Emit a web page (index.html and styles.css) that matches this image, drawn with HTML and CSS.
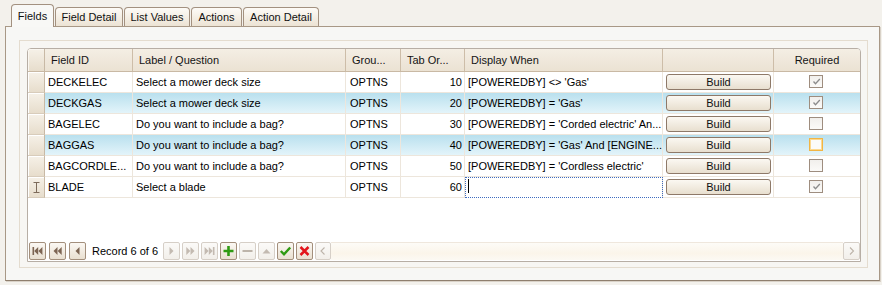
FILE: index.html
```html
<!DOCTYPE html>
<html>
<head>
<meta charset="utf-8">
<link rel="stylesheet" href="styles.css">
</head>
<body>
<div class="tabs">
  <div class="tab active w1">Fields</div>
  <div class="tab w2">Field Detail</div>
  <div class="tab w3">List Values</div>
  <div class="tab w4">Actions</div>
  <div class="tab w5">Action Detail</div>
</div>
<div class="page">
  <div class="panel">
    <div class="grid">
      <div class="row head">
        <div class="c ind"></div>
        <div class="c fid">Field ID</div>
        <div class="c lbl">Label / Question</div>
        <div class="c grp">Grou...</div>
        <div class="c tab-o">Tab Or...</div>
        <div class="c dw">Display When</div>
        <div class="c bld"></div>
        <div class="c req center">Required</div>
      </div>

      <div class="row">
        <div class="c ind"></div>
        <div class="c fid">DECKELEC</div>
        <div class="c lbl">Select a mower deck size</div>
        <div class="c grp">OPTNS</div>
        <div class="c tab-o num">10</div>
        <div class="c dw">[POWEREDBY] &lt;&gt; 'Gas'</div>
        <div class="c bld"><div class="btn">Build</div></div>
        <div class="c req"><div class="chk"><svg width="11" height="11" viewBox="0 0 11 11"><path d="M2.5 5.5 L4.5 7.8 L8.8 3" fill="none" stroke="#8c8c8c" stroke-width="1.3"/></svg></div></div>
      </div>

      <div class="row sel">
        <div class="c ind"></div>
        <div class="c fid">DECKGAS</div>
        <div class="c lbl">Select a mower deck size</div>
        <div class="c grp">OPTNS</div>
        <div class="c tab-o num">20</div>
        <div class="c dw">[POWEREDBY] = 'Gas'</div>
        <div class="c bld"><div class="btn">Build</div></div>
        <div class="c req"><div class="chk"><svg width="11" height="11" viewBox="0 0 11 11"><path d="M2.5 5.5 L4.5 7.8 L8.8 3" fill="none" stroke="#8c8c8c" stroke-width="1.3"/></svg></div></div>
      </div>

      <div class="row">
        <div class="c ind"></div>
        <div class="c fid">BAGELEC</div>
        <div class="c lbl">Do you want to include a bag?</div>
        <div class="c grp">OPTNS</div>
        <div class="c tab-o num">30</div>
        <div class="c dw">[POWEREDBY] = 'Corded electric' An...</div>
        <div class="c bld"><div class="btn">Build</div></div>
        <div class="c req"><div class="chk"></div></div>
      </div>

      <div class="row sel">
        <div class="c ind"></div>
        <div class="c fid">BAGGAS</div>
        <div class="c lbl">Do you want to include a bag?</div>
        <div class="c grp">OPTNS</div>
        <div class="c tab-o num">40</div>
        <div class="c dw">[POWEREDBY] = 'Gas' And [ENGINE...</div>
        <div class="c bld"><div class="btn">Build</div></div>
        <div class="c req"><div class="chk hot"></div></div>
      </div>

      <div class="row">
        <div class="c ind"></div>
        <div class="c fid">BAGCORDLE...</div>
        <div class="c lbl">Do you want to include a bag?</div>
        <div class="c grp">OPTNS</div>
        <div class="c tab-o num">50</div>
        <div class="c dw">[POWEREDBY] = 'Cordless electric'</div>
        <div class="c bld"><div class="btn">Build</div></div>
        <div class="c req"><div class="chk"></div></div>
      </div>

      <div class="row">
        <div class="c ind"><svg class="ibeam" width="7" height="11" viewBox="0 0 7 11"><path d="M0.5 0.5 H6.5 M3.5 0.5 V10.5 M0.5 10.5 H6.5" fill="none" stroke="#7d6b5a" stroke-width="1"/></svg></div>
        <div class="c fid">BLADE</div>
        <div class="c lbl">Select a blade</div>
        <div class="c grp">OPTNS</div>
        <div class="c tab-o num">60</div>
        <div class="c dw edit"><span class="caret"></span></div>
        <div class="c bld"><div class="btn">Build</div></div>
        <div class="c req"><div class="chk"><svg width="11" height="11" viewBox="0 0 11 11"><path d="M2.5 5.5 L4.5 7.8 L8.8 3" fill="none" stroke="#8c8c8c" stroke-width="1.3"/></svg></div></div>
      </div>

      <div class="empty"></div>

      <div class="nav">
        <div class="nb on g3"><svg width="15" height="16" viewBox="0 0 15 16"><rect x="2.5" y="4" width="1.6" height="8" fill="#7d6553"/><path d="M8.2 4 V12 L4.2 8 Z M12.4 4 V12 L8.4 8 Z" fill="#7d6553"/></svg></div>
        <div class="nb on g3"><svg width="15" height="16" viewBox="0 0 15 16"><path d="M7.5 4 V12 L3.5 8 Z M11.7 4 V12 L7.7 8 Z" fill="#7d6553"/></svg></div>
        <div class="nb on"><svg width="15" height="16" viewBox="0 0 15 16"><path d="M9.5 4 V12 L5.5 8 Z" fill="#7d6553"/></svg></div>
        <div class="rec">Record 6 of 6</div>
        <div class="nb off g2"><svg width="15" height="16" viewBox="0 0 15 16"><path d="M5.5 4 V12 L9.5 8 Z" fill="#c3bab1"/></svg></div>
        <div class="nb off g2"><svg width="15" height="16" viewBox="0 0 15 16"><path d="M3.3 4 V12 L7.3 8 Z M7.5 4 V12 L11.5 8 Z" fill="#c3bab1"/></svg></div>
        <div class="nb off g2"><svg width="15" height="16" viewBox="0 0 15 16"><path d="M2.6 4 V12 L6.6 8 Z M6.8 4 V12 L10.8 8 Z" fill="#c3bab1"/><rect x="10.9" y="4" width="1.6" height="8" fill="#c3bab1"/></svg></div>
        <div class="nb on g2"><svg width="15" height="16" viewBox="0 0 15 16"><path d="M2.5 6.7 H12.5 V9.3 H2.5 Z M6.2 3 H8.8 V13 H6.2 Z" fill="#2f9a12"/></svg></div>
        <div class="nb off g2"><svg width="15" height="16" viewBox="0 0 15 16"><path d="M2.5 7 H12.5 V9 H2.5 Z" fill="#bdb4aa"/></svg></div>
        <div class="nb off g2"><svg width="15" height="16" viewBox="0 0 15 16"><path d="M3.5 10.5 H11.5 L7.5 6 Z" fill="#c3bab1"/></svg></div>
        <div class="nb on g2"><svg width="15" height="16" viewBox="0 0 15 16"><path d="M2.8 8 L6 11.3 L12.2 4.5" fill="none" stroke="#2f9a12" stroke-width="2.4"/></svg></div>
        <div class="nb on g2"><svg width="15" height="16" viewBox="0 0 15 16"><path d="M3.5 4 L11.5 12 M11.5 4 L3.5 12" fill="none" stroke="#e3151b" stroke-width="2.5"/></svg></div>
        <div class="nb off sl"><svg width="14" height="16" viewBox="0 0 14 16"><path d="M8.5 4.5 L5 8 L8.5 11.5" fill="none" stroke="#bdb4aa" stroke-width="1.1"/></svg></div>
        <div class="track"></div>
        <div class="nb off sr"><svg width="15" height="16" viewBox="0 0 15 16"><path d="M6 4.5 L9.5 8 L6 11.5" fill="none" stroke="#bdb4aa" stroke-width="1.1"/></svg></div>
      </div>
    </div>
  </div>
</div>
</body>
</html>
```

FILE: styles.css
```css
* { box-sizing: border-box; }
html, body {
  margin: 0;
  padding: 0;
}
body {
  background: #f3f1ec;
  font-family: "Liberation Sans", Arial, sans-serif;
  font-size: 11px;
  color: #000;
  width: 882px;
  height: 285px;
  overflow: hidden;
}

/* tabs */
.tabs {
  display: flex;
  align-items: flex-end;
  height: 26px;
  padding-left: 11px;
  gap: 1px;
}
.tab {
  height: 19px;
  border: 1px solid #a39180;
  border-bottom: none;
  border-radius: 4px 4px 0 0;
  background: linear-gradient(#fdfbf7, #ece3d4);
  text-align: center;
  line-height: 19px;
  font-size: 11px;
  color: #111;
  white-space: nowrap;
}
.tab.active {
  height: 23px;
  margin-bottom: -1px;
  position: relative;
  z-index: 2;
  background: #f8f8f6;
  line-height: 22px;
  padding-bottom: 2px;
}
.w1 { width: 43px; }
.w2 { width: 68px; }
.w3 { width: 66px; }
.w4 { width: 51px; }
.w5 { width: 76px; }

/* tab page */
.page {
  margin-left: 5px;
  width: 875px;
  border: 1px solid #a89886;
  border-bottom-color: #8f7f6e;
  background: #f7f7f5;
  padding: 13px 11px 12px 13px;
  box-shadow: 1px 1px 0 #d9d2c8;
}
.panel {
  border: 1px solid #e4dccf;
  background: #f7f6f3;
  padding: 7px 6px 5px 7px;
}
.grid {
  border: 1px solid #b7aea5;
  border-radius: 4px 4px 0 0;
  background: #fff;
  overflow: hidden;
}

/* rows */
.row {
  display: flex;
  height: 21px;
  border-bottom: 1px solid #ede6dc;
}
.row.head {
  height: 23px;
  border-bottom: 1px solid #c9b9a4;
  background: linear-gradient(#f4eee4, #ebe2d3);
}
.row.sel {
  background: linear-gradient(#b9e0ee, #e3f4fa);
}
.c {
  height: 100%;
  border-right: 1px solid #ede6dc;
  padding: 0 3px;
  line-height: 20px;
  white-space: nowrap;
  overflow: hidden;
  flex: none;
}
.head .c {
  border-right-color: #cdbda8;
  padding-left: 6px;
  line-height: 22px;
  color: #141414;
}
.ind { width: 17px; padding: 0; }
.fid { width: 88px; }
.lbl { width: 213px; }
.grp { width: 55px; padding-left: 4px; }
.tab-o { width: 64px; }
.dw { width: 198px; }
.bld { width: 111px; padding: 0; }
.req { width: 86px; border-right: none; padding: 0; }
.head .req { padding-left: 0; }
.center { text-align: center; }
.num { text-align: right; padding-right: 2px; }

.row .ind {
  background: linear-gradient(#f6f1e8, #e7ddcc);
  border-right: 1px solid #c8b9a5;
  box-shadow: inset 1px 1px 0 #fff;
  display: flex;
  align-items: center;
  justify-content: center;
}
.row:not(.head) .ind { border-bottom: 1px solid #d8ccbb; height: calc(100% + 1px); }
.head .ind { box-shadow: inset 1px 1px 0 #faf7f1; }

.btn {
  margin: 2px 0 0 3px;
  width: 105px;
  height: 16px;
  border: 1px solid #8e7968;
  border-radius: 3px;
  background: linear-gradient(#fbf8f2, #e8dfcf);
  text-align: center;
  line-height: 14px;
  color: #111;
}
.chk {
  margin: 3px 0 0 35px;
  width: 14px;
  height: 13px;
  border: 1px solid #9e8d7f;
  background: linear-gradient(#f1efec, #fbfaf8);
  display: flex;
  align-items: center;
  justify-content: center;
}
.chk.hot {
  border-color: #f2b544;
  box-shadow: inset 0 0 0 1px #fcd98f;
  background: #fbfbf9;
}

.edit {
  background: #fff;
  outline: 1px dotted #3f6cc0;
  outline-offset: -1px;
  display: flex;
  align-items: center;
  height: calc(100% + 1px);
}
.caret {
  display: block;
  width: 1px;
  height: 14px;
  background: #000;
  margin-top: -3px;
}

.empty { height: 43px; }

/* navigator */
.nav {
  height: 20px;
  display: flex;
  align-items: flex-start;
  padding: 1px 0 0 1px;
}
.nb {
  width: 17px;
  height: 18px;
  border: 1px solid #a38f7c;
  border-radius: 2px;
  background: linear-gradient(#fbf8f3, #e9e0d1);
  display: flex;
  align-items: center;
  justify-content: center;
  flex: none;
}
.nb.off {
  border-color: #d6cfc7;
  background: linear-gradient(#fbfaf8, #f2efea);
}
.nb.g3 { margin-right: 3px; }
.nb.g2 { margin-right: 2px; }
.nb.sl { width: 16px; }
.rec {
  width: 77px;
  padding-left: 6px;
  line-height: 18px;
  font-size: 11px;
  white-space: nowrap;
  flex: none;
}
.track {
  flex: 1;
  height: 18px;
  border-top: 1px solid #efe7dd;
  background: linear-gradient(#fdfbf7, #fbf5ea 60%, #fcf9f3);
}
.nb.sr { width: 17px; }
```
